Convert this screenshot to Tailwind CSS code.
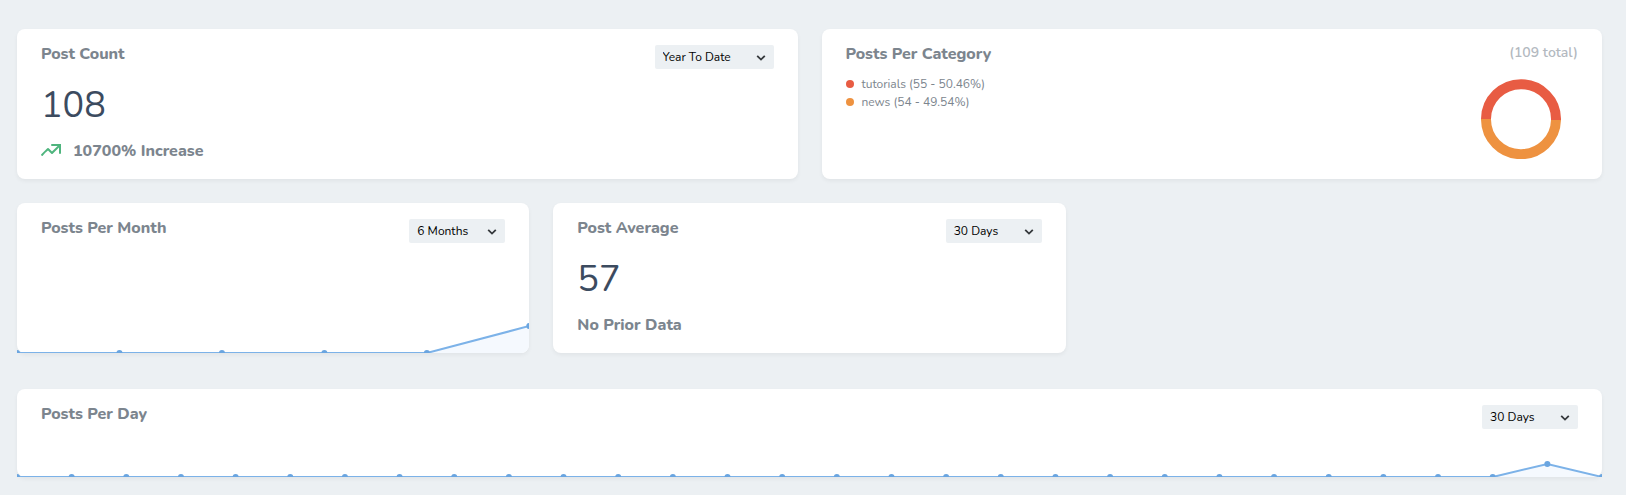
<!DOCTYPE html>
<html lang="en">
<head>
<meta charset="utf-8">
<meta name="viewport" content="width=device-width, initial-scale=1">
<title>Post metrics</title>
<script src="https://cdn.jsdelivr.net/npm/@tailwindcss/browser@4"></script>
</head>
<body class="min-h-screen bg-[#ecf0f3] font-[Nunito,Lato,sans-serif] text-[#7c858e]">
<main class="flex flex-col gap-6 pt-[29px] pr-6 pb-4 pl-[17px]">

  <div class="grid grid-cols-2 gap-6">
    <section class="flex min-h-[150px] flex-col rounded-lg bg-white px-6 py-4 shadow-[0_2px_4px_rgba(0,0,0,0.05)]">
      <div class="flex items-start justify-between">
        <h2 class="text-base leading-[18px] font-extrabold"><label for="count-range">Post Count</label></h2>
        <div class="relative">
          <select id="count-range" class="block h-6 w-[119px] appearance-none rounded-xs bg-[#ecf0f3] px-2 text-xs leading-6 text-black"><option>Year To Date</option></select>
          <svg class="pointer-events-none absolute top-[10px] right-2 h-[6px] w-[10px]" viewBox="0 0 10 6" fill="none" stroke="#35393c" stroke-width="1.800"><path d="M1.200 .8L5 4.600 8.800 .8"/></svg>
        </div>
      </div>
      <p class="mt-[19px] text-4xl leading-9 text-[#3c4b5f]">108</p>
      <p class="mt-[17px] flex items-start gap-3 text-base leading-5 font-extrabold">
        <svg class="mt-[3px] h-3 w-5" viewBox="0 0 20 12"><path fill="#4fb57e" d="M4.300 8.700L1.700 11.700A1 1 0 0 1 .3 10.300L6.300 4.300a1 1 0 0 1 1.400 0L11 7.600 16.600 2H11a1 1 0 0 1 0-2h9v9a1 1 0 0 1-2 0V3.400l-6.300 6.300a1 1 0 0 1-1.400 0L7 6.400z"/></svg>
        10700% Increase
      </p>
    </section>

    <section class="flex min-h-[150px] flex-col rounded-lg bg-white px-6 py-4 shadow-[0_2px_4px_rgba(0,0,0,0.05)]">
      <div class="flex items-start justify-between">
        <h2 class="text-base leading-[18px] font-extrabold">Posts Per Category</h2>
        <span class="text-sm leading-4 font-semibold text-[#b3b9bf]">(109 total)</span>
      </div>
      <div class="flex items-start justify-between">
        <ul class="mt-3 text-xs leading-[18px]">
          <li class="flex items-center gap-2"><span class="size-2 rounded-full bg-[#e85c43]"></span>tutorials (55 - 50.46%)</li>
          <li class="flex items-center gap-2"><span class="size-2 rounded-full bg-[#ee9240]"></span>news (54 - 49.54%)</li>
        </ul>
        <svg class="mt-4 mr-[17px] size-20" viewBox="0 0 80 80" fill="none" stroke-width="10">
          <path stroke="#ee9240" d="M74.990 41A35 35 0 0 1 5 40"/>
          <path stroke="#e85c43" d="M5 40A35 35 0 1 1 74.990 41"/>
        </svg>
      </div>
    </section>
  </div>

  <div class="grid grid-cols-3 gap-6">
    <section class="flex min-h-[150px] flex-col justify-between rounded-lg bg-white pt-4 shadow-[0_2px_4px_rgba(0,0,0,0.05)]">
      <div class="flex items-start justify-between px-6">
        <h2 class="text-base leading-[18px] font-extrabold"><label for="month-range">Posts Per Month</label></h2>
        <div class="relative">
          <select id="month-range" class="block h-6 w-24 appearance-none rounded-xs bg-[#ecf0f3] px-2 text-xs leading-6 text-black"><option>6 Months</option></select>
          <svg class="pointer-events-none absolute top-[10px] right-2 h-[6px] w-[10px]" viewBox="0 0 10 6" fill="none" stroke="#35393c" stroke-width="1.800"><path d="M1.200 .8L5 4.600 8.800 .8"/></svg>
        </div>
      </div>
      <svg class="h-[60px] w-full rounded-br-lg" viewBox="0 0 5 60" preserveAspectRatio="none" fill="none" stroke-linecap="round">
        <path fill="#f5f9fe" d="M4 60L5 33V60z"/>
        <path stroke="#7cb2e8" stroke-width="2" vector-effect="non-scaling-stroke" d="M0 60H4L5 33"/>
        <path stroke="#6aa5e0" stroke-width="6" vector-effect="non-scaling-stroke" d="M0 60h0M1 60h0M2 60h0M3 60h0M4 60h0M5 33h0"/>
      </svg>
    </section>

    <section class="flex min-h-[150px] flex-col rounded-lg bg-white px-6 py-4 shadow-[0_2px_4px_rgba(0,0,0,0.05)]">
      <div class="flex items-start justify-between">
        <h2 class="text-base leading-[18px] font-extrabold"><label for="average-range">Post Average</label></h2>
        <div class="relative">
          <select id="average-range" class="block h-6 w-24 appearance-none rounded-xs bg-[#ecf0f3] px-2 text-xs leading-6 text-black"><option>30 Days</option></select>
          <svg class="pointer-events-none absolute top-[10px] right-2 h-[6px] w-[10px]" viewBox="0 0 10 6" fill="none" stroke="#35393c" stroke-width="1.800"><path d="M1.200 .8L5 4.600 8.800 .8"/></svg>
        </div>
      </div>
      <p class="mt-[19px] text-4xl leading-9 text-[#3c4b5f]">57</p>
      <p class="mt-[17px] text-base leading-5 font-extrabold">No Prior Data</p>
    </section>
  </div>

  <section class="mt-3 flex min-h-[88px] flex-col justify-between rounded-lg bg-white pt-4 shadow-[0_2px_4px_rgba(0,0,0,0.05)]">
    <div class="flex items-start justify-between px-6">
      <h2 class="text-base leading-[18px] font-extrabold"><label for="day-range">Posts Per Day</label></h2>
      <div class="relative">
        <select id="day-range" class="block h-6 w-24 appearance-none rounded-xs bg-[#ecf0f3] px-2 text-xs leading-6 text-black"><option>30 Days</option></select>
        <svg class="pointer-events-none absolute top-[10px] right-2 h-[6px] w-[10px]" viewBox="0 0 10 6" fill="none" stroke="#35393c" stroke-width="1.800"><path d="M1.200 .8L5 4.600 8.800 .8"/></svg>
      </div>
    </div>
    <svg class="h-5 w-full" viewBox="0 0 29 20" preserveAspectRatio="none" fill="none" stroke-linecap="round">
      <path fill="#f5f9fe" d="M27 20L28 7L29 20z"/>
      <path stroke="#7cb2e8" stroke-width="2" vector-effect="non-scaling-stroke" d="M0 20H27L28 7L29 20"/>
      <path stroke="#6aa5e0" stroke-width="6" vector-effect="non-scaling-stroke" d="M0 20h0M1 20h0M2 20h0M3 20h0M4 20h0M5 20h0M6 20h0M7 20h0M8 20h0M9 20h0M10 20h0M11 20h0M12 20h0M13 20h0M14 20h0M15 20h0M16 20h0M17 20h0M18 20h0M19 20h0M20 20h0M21 20h0M22 20h0M23 20h0M24 20h0M25 20h0M26 20h0M27 20h0M28 7h0M29 20h0"/>
    </svg>
  </section>
</main>
</body>
</html>
